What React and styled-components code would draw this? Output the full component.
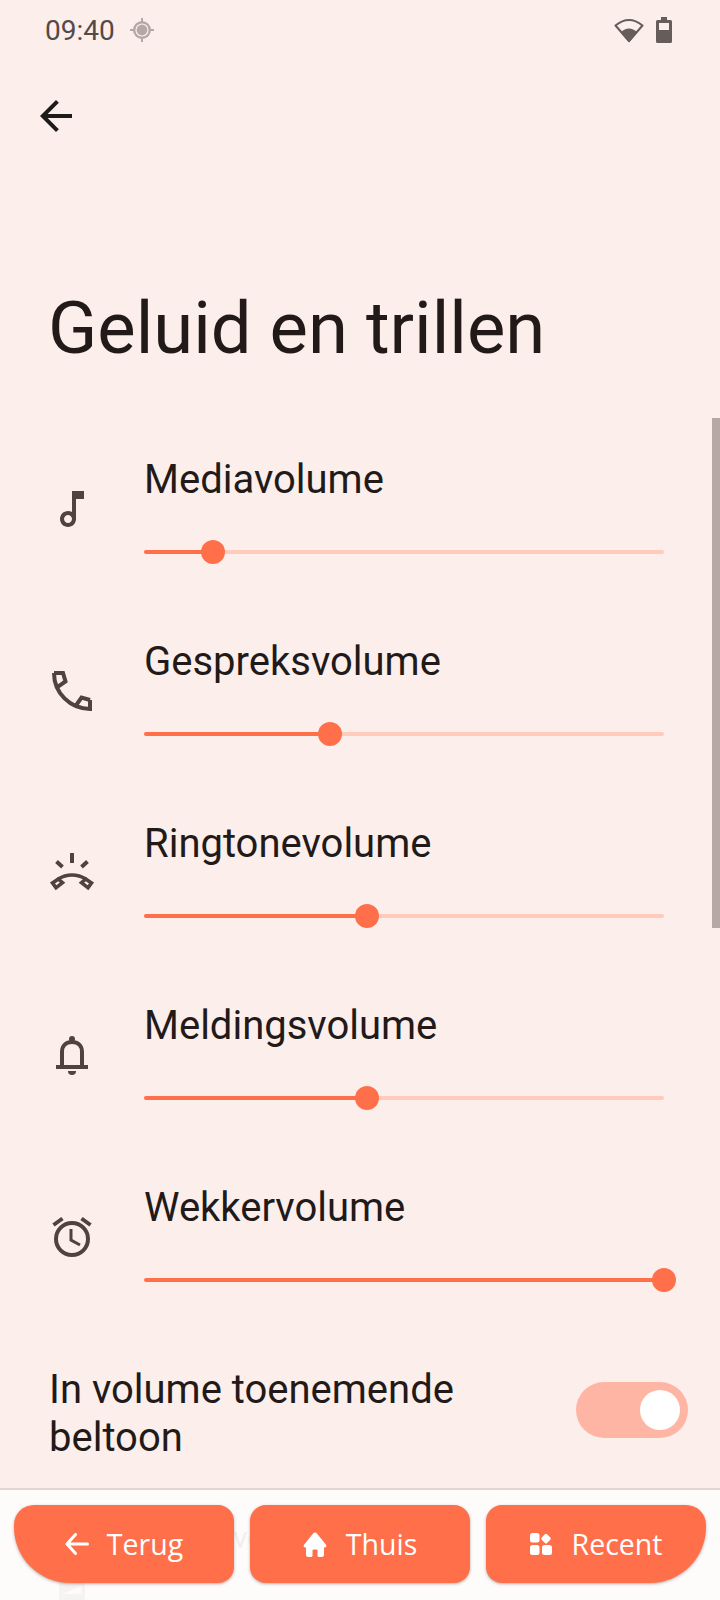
import React from 'react';
import styled, { createGlobalStyle } from 'styled-components';

const GlobalStyle = createGlobalStyle`
  html, body {
    margin: 0;
    padding: 0;
    background: #fceeeb;
  }
  * {
    box-sizing: border-box;
  }
`;

const Root = styled.div`
  position: relative;
  width: 720px;
  height: 1600px;
  overflow: hidden;
  background: #fceeeb;
  font-family: Roboto, 'Liberation Sans', sans-serif;
  color: #211a18;
`;

const StatusBar = styled.div`
  display: flex;
  align-items: center;
  justify-content: space-between;
  height: 60px;
  padding: 0 48px 0 45px;
`;

const StatusLeft = styled.div`
  display: flex;
  align-items: center;
  gap: 15px;
`;

const Time = styled.span`
  font-size: 28px;
  font-weight: 400;
  color: #544a48;
`;

const StatusRight = styled.div`
  display: flex;
  align-items: center;
  gap: 12px;
`;

const Toolbar = styled.div`
  display: flex;
  align-items: center;
  height: 112px;
  padding-left: 32px;
`;

const Title = styled.h1`
  margin: 0;
  padding: 117px 0 0 48px;
  height: 262px;
  font-size: 72.4px;
  line-height: 80px;
  font-weight: 400;
  color: #211a18;
`;

const VolumeRow = styled.div`
  display: grid;
  grid-template-columns: 96px 520px;
  height: 182px;
  padding-left: 48px;
`;

const IconSlot = styled.div`
  width: 48px;
  height: 48px;
  margin-top: 51px;
  color: #50423e;
`;

const RowBody = styled.div`
  padding-top: 22px;
`;

const RowLabel = styled.div`
  font-size: 40px;
  line-height: 48px;
  color: #211a18;
`;

const SliderWrap = styled.div`
  position: relative;
  display: flex;
  align-items: center;
  height: 48px;
  margin-top: 24px;
`;

const Track = styled.div`
  width: 100%;
  height: 4px;
  border-radius: 2px;
  background: #ffccbc;
  overflow: hidden;
`;

const TrackFill = styled.div`
  height: 100%;
  background: #ff704a;
`;

const Thumb = styled.div`
  position: absolute;
  top: 12px;
  width: 24px;
  height: 24px;
  margin-left: -12px;
  border-radius: 50%;
  background: #ff704a;
`;

const ToggleRow = styled.div`
  display: flex;
  align-items: center;
  justify-content: space-between;
  padding: 22px 32px 0 49px;
`;

const ToggleLabel = styled.div`
  width: 460px;
  font-size: 40px;
  line-height: 48px;
  color: #211a18;
`;

const ToggleTrack = styled.div`
  display: flex;
  align-items: center;
  justify-content: flex-end;
  width: 112px;
  height: 56px;
  margin-top: -8px;
  padding-right: 8px;
  border-radius: 28px;
  background: #ffb5a3;
`;

const ToggleKnob = styled.div`
  width: 40px;
  height: 40px;
  border-radius: 50%;
  background: #ffffff;
`;

/* what has scrolled under the navigation bar, only just visible through it */
const HiddenLabel = styled.div`
  padding: 52px 0 0 233px;
  font-size: 30px;
  line-height: 48px;
  white-space: nowrap;
  color: #211a18;
`;

const HiddenIcon = styled.div`
  margin: 21px 0 0 59px;
  width: 26px;
  height: 40px;
`;

const Scrollbar = styled.div`
  position: absolute;
  top: 418px;
  right: 0;
  width: 8px;
  height: 510px;
  background: #b5a8a5;
`;

const BottomBar = styled.div`
  position: absolute;
  left: 0;
  right: 0;
  bottom: 0;
  display: flex;
  gap: 16px;
  height: 112px;
  padding: 15px 14px 0;
  border-top: 2px solid #e2d6d3;
  background: rgba(254, 252, 252, 0.94);
`;

const NavButton = styled.div`
  display: flex;
  align-items: center;
  justify-content: center;
  gap: ${(p) => p.$gap}px;
  width: 220px;
  height: 78px;
  border-radius: ${(p) => p.$radius};
  background: #ff704a;
  box-shadow: 0 1px 3px rgba(60, 30, 20, 0.35);
  color: #ffffff;
  font-family: 'Open Sans', Roboto, sans-serif;
  font-size: 28.5px;
  font-weight: 500;
`;

const icons = {
  music: (
    <path
      fill="currentColor"
      d="M24 6l.02 21.1c-1.18-.68-2.54-1.1-4-1.1C15.58 26 12 29.58 12 34s3.58 8 8 8 8-3.58 8-8V14h8V6H24zm-3.98 32c-2.2 0-4-1.8-4-4s1.8-4 4-4 4 1.8 4 4-1.8 4-4 4z"
    />
  ),
  phone: (
    <path
      fill="none"
      stroke="currentColor"
      strokeWidth="4"
      d="M6 6H15L17.5 14.5 9 20.4M42 33L33.5 30.5 27.6 39M6 6A36 36 0 0 0 42 42V33M15 6"
    />
  ),
  ring: (
    <g fill="none" stroke="currentColor" strokeWidth="3.6">
      <path d="M24 4V14M8.500 12.500L14.500 18M39.500 12.500L33.500 18" strokeWidth="4" />
      <path d="M10.300 30C15 27 20 26 24 26S33 27 37.700 30" />
      <path d="M10.300 30L14.500 33.700 8 38.800 4.500 34Z" />
      <path d="M37.700 30L33.500 33.700 40 38.800 43.500 34Z" />
    </g>
  ),
  bell: (
    <g fill="none" stroke="currentColor" strokeWidth="4">
      <path d="M14 36V21C14 15 18 11 24 11S34 15 34 21V36M8 36H40" />
      <circle cx="24" cy="8" r="3" fill="currentColor" stroke="none" />
      <path d="M20 40H28A4 4 0 0 1 20 40Z" fill="currentColor" stroke="none" />
    </g>
  ),
  alarm: (
    <g fill="none" stroke="currentColor" strokeWidth="4">
      <circle cx="24" cy="26" r="16" />
      <path d="M5.500 12L14.500 5.500M42.500 12L33.500 5.500" />
      <path d="M23 16V27L32 32" strokeWidth="3" />
    </g>
  ),
};

const rows = [
  { label: 'Mediavolume', icon: 'music', value: 69 },
  { label: 'Gespreksvolume', icon: 'phone', value: 186 },
  { label: 'Ringtonevolume', icon: 'ring', value: 223 },
  { label: 'Meldingsvolume', icon: 'bell', value: 223 },
  { label: 'Wekkervolume', icon: 'alarm', value: 520 },
];

const LocationIcon = () => (
  <svg width="24" height="24" viewBox="0 0 24 24">
    <path d="M12 0V24M0 12H24" stroke="#b3a8a6" strokeWidth="2" />
    <circle cx="12" cy="12" r="9" fill="#b3a8a6" />
    <circle cx="12" cy="12" r="6" fill="#b3a8a6" stroke="#fceeeb" strokeWidth="1.2" />
  </svg>
);

const WifiIcon = () => (
  <svg width="30" height="26" viewBox="0 0 30 26">
    <path d="M1.500 8.500Q15-2.500 28.500 8.500L15 24Z" fill="none" stroke="#665c5a" strokeWidth="2" strokeLinejoin="round" />
    <path d="M6.500 15.500Q15 7.500 23.500 15.500L15 25.500Z" fill="#665c5a" />
  </svg>
);

const BatteryIcon = () => (
  <svg width="16" height="26" viewBox="0 0 16 26">
    <path d="M5 0H11V3H14.500Q16 3 16 4.500V24.500Q16 26 14.500 26H1.500Q0 26 0 24.500V4.500Q0 3 1.500 3H5Z" fill="#665c5a" />
    <rect x="3" y="6" width="10" height="7" fill="#fceeeb" />
  </svg>
);

const BackIcon = () => (
  <svg width="48" height="48" viewBox="0 0 24 24">
    <path fill="#1d1b1a" d="M20 11H7.830l5.590-5.590L12 4l-8 8 8 8 1.410-1.410L7.830 13H20v-2z" />
  </svg>
);

const ArrowIcon = () => (
  <svg width="24" height="22" viewBox="0 0 24 22">
    <path d="M22.500 11H2.500M10.500 1.500L2 11L10.500 20.500" fill="none" stroke="#fff" strokeWidth="3" strokeLinecap="round" strokeLinejoin="round" />
  </svg>
);

const HomeIcon = () => (
  <svg width="24" height="25" viewBox="0 0 24 25">
    <path
      fill="#fff"
      d="M12 0.500C12.800 0.500 13.400 1 13.900 1.600L22.800 12.500C24 14 23.200 15.500 21.500 15.500H21V22.500Q21 25 18.500 25H16Q14.500 25 14.500 23.500V18.500Q14.500 17.500 13.500 17.500H10.500Q9.500 17.500 9.500 18.500V23.500Q9.500 25 8 25H5.500Q3 25 3 22.500V15.500H2.500C0.800 15.500 0 14 1.200 12.500L10.100 1.600C10.600 1 11.200 0.500 12 0.500Z"
    />
  </svg>
);

const RecentIcon = () => (
  <svg width="22" height="22" viewBox="0 0 22 22">
    <g fill="#fff">
      <rect x="0" y="0" width="9.500" height="9.500" rx="2.500" />
      <rect x="0" y="12" width="9.500" height="10" rx="2.500" />
      <rect x="12" y="12" width="10" height="10" rx="2.500" />
      <rect x="12.200" y="1.800" width="7.600" height="7.600" rx="1.500" transform="rotate(45 16 5.600)" />
    </g>
  </svg>
);

const App = () => {
  return (
    <Root>
      <GlobalStyle />
      <StatusBar>
        <StatusLeft>
          <Time>09:40</Time>
          <LocationIcon />
        </StatusLeft>
        <StatusRight>
          <WifiIcon />
          <BatteryIcon />
        </StatusRight>
      </StatusBar>
      <Toolbar>
        <BackIcon />
      </Toolbar>
      <Title>Geluid en trillen</Title>
      {rows.map((row) => (
        <VolumeRow key={row.label}>
          <IconSlot>
            <svg width="48" height="48" viewBox="0 0 48 48">
              {icons[row.icon]}
            </svg>
          </IconSlot>
          <RowBody>
            <RowLabel>{row.label}</RowLabel>
            <SliderWrap>
              <Track>
                <TrackFill style={{ width: row.value }} />
              </Track>
              <Thumb style={{ left: row.value }} />
            </SliderWrap>
          </RowBody>
        </VolumeRow>
      ))}
      <ToggleRow>
        <ToggleLabel>In volume toenemende beltoon</ToggleLabel>
        <ToggleTrack>
          <ToggleKnob />
        </ToggleTrack>
      </ToggleRow>
      <HiddenLabel>vo</HiddenLabel>
      <HiddenIcon>
        <svg width="26" height="40" viewBox="0 0 26 40">
          <rect width="26" height="40" fill="#7a6e6a" />
          <path d="M3.500 11L22.500 3V11Z" fill="#fceeeb" />
        </svg>
      </HiddenIcon>
      <Scrollbar />
      <BottomBar>
        <NavButton $gap={18} $radius="20px 16px 16px 56px">
          <ArrowIcon />
          Terug
        </NavButton>
        <NavButton $gap={19} $radius="16px">
          <HomeIcon />
          Thuis
        </NavButton>
        <NavButton $gap={20} $radius="16px 20px 56px 16px">
          <RecentIcon />
          Recent
        </NavButton>
      </BottomBar>
    </Root>
  );
};

export default App;
